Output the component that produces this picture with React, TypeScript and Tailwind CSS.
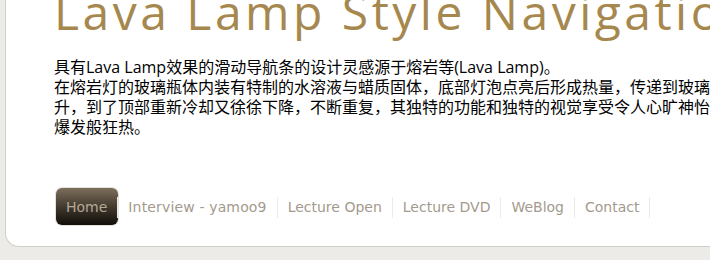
import React from 'react';

const menu = ['Home', 'Interview - yamoo9', 'Lecture Open', 'Lecture DVD', 'WeBlog', 'Contact'];

export default function App() {
  return (
    <div className="h-screen overflow-hidden bg-[#ecebe7] pl-[5px]">
      <div className="h-[247px] overflow-hidden rounded-bl-[14px] border-b border-l border-[#cfcfcb] bg-white pl-[48px]">
        <h1 className="mt-[-12px] whitespace-nowrap font-['Open_Sans',sans-serif] text-[48px] font-normal leading-none tracking-[3.5px] text-[#a6884e]">
          Lava Lamp Style Navigation
        </h1>

        <p className="mt-[21px] whitespace-nowrap font-['Open_Sans','Noto_Sans_CJK_SC',sans-serif] text-[16px] leading-[20px] text-black">
          具有Lava Lamp效果的滑动导航条的设计灵感源于熔岩等(Lava Lamp)。
          <br />
          在熔岩灯的玻璃瓶体内装有特制的水溶液与蜡质固体，底部灯泡点亮后形成热量，传递到玻璃瓶内的蜡质固体使之受热膨胀上
          <br />
          升，到了顶部重新冷却又徐徐下降，不断重复，其独特的功能和独特的视觉享受令人心旷神怡，曾在欧美引起
          <br />
          爆发般狂热。
        </p>

        <nav className="ml-[2px] mt-[51px]">
          <ul className="relative flex h-[38px] items-center font-['DejaVu_Sans',sans-serif] text-[14px]">
            {/* the lava blob sits behind the current item */}
            <li className="absolute left-0 top-0 h-[37px] w-[62px] rounded-[6px] bg-linear-to-b from-[#7d6f5c] to-[#120e0a] ring-1 ring-[#e4e1dc]" />
            {menu.map((label, i) => (
              <li
                key={label}
                className={`relative border-r border-[#ebebeb] px-[10px] leading-[21px] ${
                  i === 0 ? 'text-[#b4a996]' : 'text-[#a39a8d]'
                } ${i === 1 ? 'tracking-[0.15px]' : ''}`}
              >
                {label}
              </li>
            ))}
          </ul>
        </nav>
      </div>
    </div>
  );
}
